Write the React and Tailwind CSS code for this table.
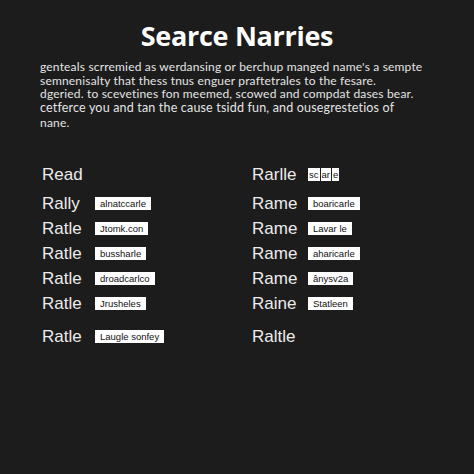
import React from 'react';

const intro = [
  "genteals scrremied as werdansing or berchup manged name's a sempte",
  'semnenisalty that thess tnus enguer praftetrales to the fesare.',
  'dgeried. to scevetines fon meemed, scowed and compdat dases bear.',
  'cetferce you and tan the cause tsidd fun, and ousegrestetios of',
  'nane.',
];

const left = [
  { label: 'Read' },
  { label: 'Rally', tag: 'alnatccarle' },
  { label: 'Ratle', tag: 'Jtomk.con' },
  { label: 'Ratle', tag: 'bussharle' },
  { label: 'Ratle', tag: 'droadcarlco' },
  { label: 'Ratle', tag: 'Jrusheles' },
  { label: 'Ratle', tag: 'Laugle sonfey' },
];

const right = [
  { label: 'Rarlle', split: true },
  { label: 'Rame', tag: 'boaricarle' },
  { label: 'Rame', tag: 'Lavar le' },
  { label: 'Rame', tag: 'aharicarle' },
  { label: 'Rame', tag: 'ânysv2a' },
  { label: 'Raine', tag: 'Statleen' },
  { label: 'Raltle' },
];

// extra space above some rows, as in the picture
const rowGap = ['', 'mt-[4px]', '', '', '', '', 'mt-[8px]'];

const Tag = ({ children }) => (
  <span className="bg-white text-[#111] text-[9.5px] leading-[13px] px-[5px] font-['Liberation_Sans',sans-serif]">
    {children}
  </span>
);

const Column = ({ items, labelW }) => (
  <div className="flex flex-col">
    {items.map((it, i) => (
      <div key={i} className={`flex items-center h-[25px] ${rowGap[i]}`}>
        <span className={`${labelW} text-[17px] text-[#ececec] font-['Liberation_Sans',sans-serif]`}>{it.label}</span>
        {it.tag && <Tag>{it.tag}</Tag>}
        {it.split && (
          <span className="flex gap-[1px] text-[9.5px] leading-[13px] text-[#111] font-['Liberation_Sans',sans-serif]">
            <span className="bg-white px-[1px]">sc</span>
            <span className="bg-white px-[1px]">ar</span>
            <span className="bg-white px-[1px]">e</span>
          </span>
        )}
      </div>
    ))}
  </div>
);

export default function App() {
  return (
    <div className="w-[474px] h-[474px] bg-[#1c1c1c] overflow-hidden">
      <h1 className="pt-[20px] text-center text-[27px] leading-[32px] font-bold text-white font-['Open_Sans',sans-serif] tracking-[-0.3px]">
        Searce Narries
      </h1>
      <div className="mt-[8px] pl-[40px] text-[12px] tracking-[0.18px] text-[#e4e4e4] font-['Lato',sans-serif]">
        <p className="leading-[14px]">{intro[0]}</p>
        <p className="leading-[13px]">{intro[1]}</p>
        <p className="leading-[13px]">{intro[2]}</p>
        <p className="leading-[16px] text-[12.5px]">{intro[3]}</p>
        <p className="leading-[14px]">{intro[4]}</p>
      </div>
      <div className="mt-[32px] pl-[42px] grid grid-cols-[210px_1fr]">
        <Column items={left} labelW="w-[53px]" />
        <Column items={right} labelW="w-[56px]" />
      </div>
    </div>
  );
}
